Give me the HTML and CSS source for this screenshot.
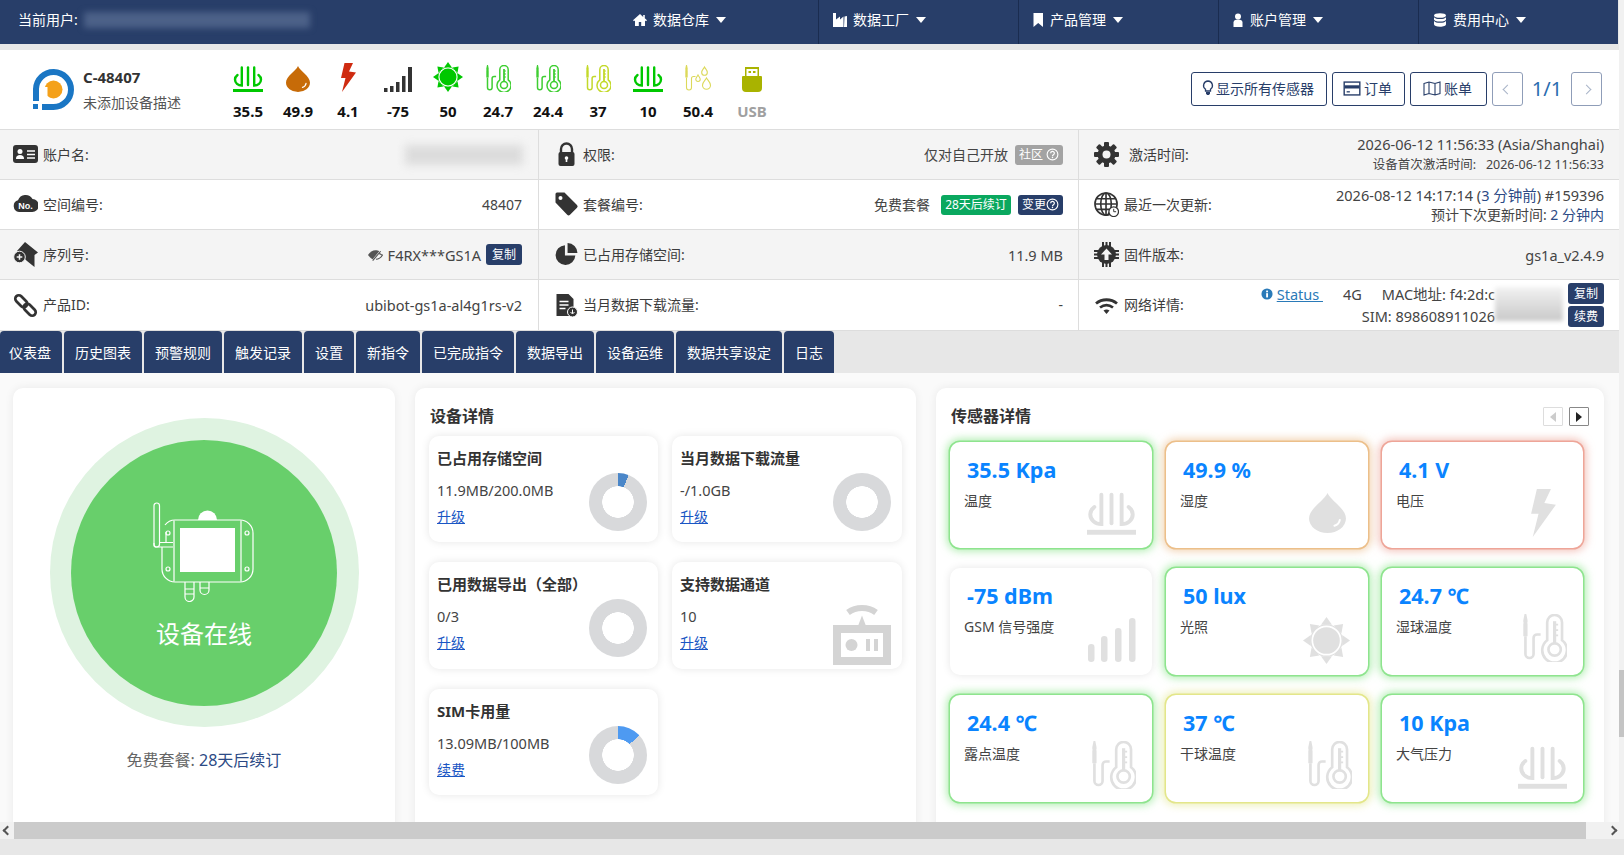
FILE: index.html
```html
<!DOCTYPE html>
<html lang="zh-CN">
<head>
    <meta charset="UTF-8">
    <meta name="viewport" content="width=device-width, initial-scale=1.0">
    <title>设备详情 - C-48407</title>
    <link rel="stylesheet" href="styles.css">
</head>
<body>
    <!-- Shared icons -->
    <svg class="icon-defs" aria-hidden="true">
        <symbol id="i-dib" viewBox="0 0 30 26">
            <g fill="none" stroke="currentColor" stroke-width="2.400" stroke-linecap="round">
                <path d="M4.500 9C2.800 10.300 2 12 2 13.500 2 17 5 19.500 8.800 19.500V1.500"/>
                <path d="M15 1.500V19"/>
                <path d="M21.200 1.500V19.500C25 19.500 28 17 28 13.500 28 12 27.200 10.300 25.500 9"/>
            </g>
            <rect x="0" y="23" width="30" height="3" fill="currentColor"/>
        </symbol>
        <symbol id="i-drop" viewBox="0 0 24 26">
            <path fill="currentColor" d="M12 0C14 5 24 10 24 16.500A12 9.500 0 0 1 0 16.500C0 10 10 5 12 0Z"/>
            <path fill="none" stroke="#fff" stroke-width="1.300" stroke-linecap="round" d="M20 17.500c-.3 2-1.500 3.200-3.500 3.800"/>
        </symbol>
        <symbol id="i-bolt" viewBox="0 0 15 29">
            <polygon fill="currentColor" points="3.500,0 12,0 8,8.500 15,9.500 1,29 4.500,15 0,15"/>
        </symbol>
        <symbol id="i-signal" viewBox="0 0 28 25">
            <g fill="currentColor">
                <rect x="0" y="21" width="3.500" height="4"/>
                <rect x="6" y="19" width="3.500" height="6"/>
                <rect x="12" y="15" width="3.500" height="10"/>
                <rect x="18" y="9" width="3.500" height="16"/>
                <rect x="24" y="0" width="4" height="25"/>
            </g>
        </symbol>
        <symbol id="i-bars" viewBox="0 0 48 44">
            <g fill="currentColor">
                <rect x="0" y="26" width="6.500" height="18" rx="3.200"/>
                <rect x="13" y="18" width="6.500" height="26" rx="3.200"/>
                <rect x="27" y="10" width="6.500" height="34" rx="3.200"/>
                <rect x="41" y="0" width="6.500" height="44" rx="3.200"/>
            </g>
        </symbol>
        <symbol id="i-sun" viewBox="0 0 30 30">
            <circle cx="15" cy="15" r="8.500" fill="currentColor"/>
            <circle cx="15" cy="15" r="10" fill="none" stroke="currentColor" stroke-width=".8"/>
            <g fill="currentColor">
                <polygon points="15,0 18.500,5 11.500,5"/>
                <polygon points="15,0 18.500,5 11.500,5" transform="rotate(45 15 15)"/>
                <polygon points="15,0 18.500,5 11.500,5" transform="rotate(90 15 15)"/>
                <polygon points="15,0 18.500,5 11.500,5" transform="rotate(135 15 15)"/>
                <polygon points="15,0 18.500,5 11.500,5" transform="rotate(180 15 15)"/>
                <polygon points="15,0 18.500,5 11.500,5" transform="rotate(225 15 15)"/>
                <polygon points="15,0 18.500,5 11.500,5" transform="rotate(270 15 15)"/>
                <polygon points="15,0 18.500,5 11.500,5" transform="rotate(315 15 15)"/>
            </g>
        </symbol>
        <symbol id="i-thermo" viewBox="0 0 26 27">
            <path fill="currentColor" d="M1.300 3.500 2 0h1l.7 3.500v1H3.600v1h.1v7h-2.400v-7h.1v-1H1.300z"/>
            <g fill="none" stroke="currentColor" stroke-width="1.500">
                <path d="M2.500 12.500V22.500a2.300 2.300 0 0 0 4.600 0V13.500a2 2 0 0 1 2-2h2"/>
                <path d="M14.800 14.800V4.700a4.200 4.200 0 0 1 8.400 0v10.100a7 7 0 1 1-8.400 0Z"/>
                <circle cx="19" cy="20" r="3.500"/>
                <path d="M19 16.500V4" stroke-width="1.800"/>
                <path d="M19 6h2M19 9h2M19 12h2" stroke-width="1"/>
            </g>
        </symbol>
        <symbol id="i-humid" viewBox="0 0 28 27">
            <path fill="currentColor" d="M1.300 3.500 2 0h1l.7 3.500v1H3.600v1h.1v7h-2.400v-7h.1v-1H1.300z"/>
            <g fill="none" stroke="currentColor" stroke-width="1.100">
                <path d="M2.500 12.500V22.500a2.500 2.500 0 0 0 5 0V13.500a2 2 0 0 1 2-2h2"/>
                <path d="M20.500 2c1 2 2.800 3.300 2.800 5.400a2.800 2.800 0 0 1-5.600 0C17.700 5.300 19.500 4 20.500 2Z"/>
                <path d="M14 10c.8 1.600 2.200 2.700 2.200 4.300a2.200 2.200 0 0 1-4.400 0c0-1.600 1.400-2.700 2.200-4.300Z"/>
                <path d="M22.500 13c1.200 2.400 4 4.300 4 7.200a4 4 0 0 1-8 0c0-2.900 2.800-4.800 4-7.200Z"/>
            </g>
        </symbol>
        <symbol id="i-usb" viewBox="0 0 20 25">
            <path fill="currentColor" d="M3 0h14v9h2a1 1 0 0 1 1 1v11a4 4 0 0 1-4 4H4a4 4 0 0 1-4-4V10a1 1 0 0 1 1-1h2Z"/>
            <rect x="4.500" y="2" width="11" height="7" fill="#fff"/>
            <rect x="6.500" y="4" width="2.500" height="2" fill="currentColor"/>
            <rect x="11" y="4" width="2.500" height="2" fill="currentColor"/>
        </symbol>
        <symbol id="i-help" viewBox="0 0 14 14">
            <circle cx="7" cy="7" r="5.800" fill="none" stroke="currentColor" stroke-width="1.200"/>
            <path fill="none" stroke="currentColor" stroke-width="1.300" d="M5 5.600a2 2 0 1 1 3 1.700c-.7.400-1 .7-1 1.500"/>
            <circle cx="7" cy="10.300" r=".8" fill="currentColor"/>
        </symbol>
    </svg>

    <div class="viewport">
        <div class="content">
            <!-- Top navigation -->
            <nav class="topnav">
                <div class="current-user">当前用户: <span class="blur-user"></span></div>
                <ul class="nav-items">
                    <li class="nav-item">
                        <svg class="nav-icon" viewBox="0 0 14 14"><path fill="#fff" d="M7 1 0 7.300l1 1 1-.9V13h3.800V9h2.400v4H12V7.400l1 .9 1-1-2.200-2V2h-1.600v2.100Z"/></svg>
                        数据仓库<span class="caret"></span>
                    </li>
                    <li class="nav-item">
                        <svg class="nav-icon" viewBox="0 0 14 14"><path fill="#fff" d="M0 0h3v6.500L7 3.500v3l3.500-3V14H0Zm11.500 3.500L14 3v11h-3Z"/></svg>
                        数据工厂<span class="caret"></span>
                    </li>
                    <li class="nav-item">
                        <svg class="nav-icon nav-icon-thin" viewBox="2 0 11 14"><path fill="#fff" d="M2.500 0h9.500v14L7.200 10 2.500 14Z"/></svg>
                        产品管理<span class="caret"></span>
                    </li>
                    <li class="nav-item">
                        <svg class="nav-icon nav-icon-thin" viewBox="2 0 11 14"><circle cx="7" cy="3.500" r="3" fill="#fff"/><path fill="#fff" d="M2.500 14V9.500C2.500 7.500 4 6.500 7 6.500s4.500 1 4.500 3V14Z"/></svg>
                        账户管理<span class="caret"></span>
                    </li>
                    <li class="nav-item">
                        <svg class="nav-icon" viewBox="0 0 14 14"><g fill="#fff"><ellipse cx="7" cy="2.500" rx="6" ry="2.300"/><path d="M1 4.200c1 1.300 3 1.800 6 1.800s5-.5 6-1.800v2.300C13 7.800 10.500 8.600 7 8.600S1 7.800 1 6.500Z"/><path d="M1 8c1 1.300 3 1.800 6 1.800s5-.5 6-1.800v3.200c0 1.500-2.500 2.500-6 2.500s-6-1-6-2.500Z"/></g></svg>
                        费用中心<span class="caret"></span>
                    </li>
                </ul>
            </nav>

            <!-- Device header -->
            <header class="device-bar">
                <svg class="logo" viewBox="0 0 44 44">
                    <path fill="none" stroke="#1a76c4" stroke-width="6" d="M5 33V21a17.500 17.500 0 1 1 17.500 18H11"/>
                    <rect x="2" y="36" width="5" height="5" fill="#1a76c4"/>
                    <circle cx="22.500" cy="21.500" r="9" fill="#f4a11a"/>
                    <path fill="#fff" d="M13 19h3.500v13H13z"/>
                </svg>
                <div class="device-name">
                    <div class="device-id">C-48407</div>
                    <div class="device-desc">未添加设备描述</div>
                </div>
                <div class="mini-sensors">
                    <div class="mini"><svg class="mini-icon c-green" width="30" height="26"><use href="#i-dib"/></svg><b>35.5</b></div>
                    <div class="mini"><svg class="mini-icon c-brown" width="24" height="26"><use href="#i-drop"/></svg><b>49.9</b></div>
                    <div class="mini"><svg class="mini-icon c-red" width="15" height="29"><use href="#i-bolt"/></svg><b>4.1</b></div>
                    <div class="mini"><svg class="mini-icon c-dark" width="28" height="25"><use href="#i-signal"/></svg><b>-75</b></div>
                    <div class="mini"><svg class="mini-icon c-green" width="30" height="30"><use href="#i-sun"/></svg><b>50</b></div>
                    <div class="mini"><svg class="mini-icon c-lime" width="26" height="27"><use href="#i-thermo"/></svg><b>24.7</b></div>
                    <div class="mini"><svg class="mini-icon c-lime" width="26" height="27"><use href="#i-thermo"/></svg><b>24.4</b></div>
                    <div class="mini"><svg class="mini-icon c-yellow" width="26" height="27"><use href="#i-thermo"/></svg><b>37</b></div>
                    <div class="mini"><svg class="mini-icon c-green" width="30" height="26"><use href="#i-dib"/></svg><b>10</b></div>
                    <div class="mini"><svg class="mini-icon c-pale" width="28" height="27"><use href="#i-humid"/></svg><b>50.4</b></div>
                    <div class="mini mini-usb"><svg class="mini-icon c-olive" width="20" height="25"><use href="#i-usb"/></svg><b>USB</b></div>
                </div>
                <div class="device-actions">
                    <button class="btn btn-narrow">
                        <svg class="btn-icon" viewBox="0 0 12 16"><path fill="none" stroke="currentColor" stroke-width="1.300" d="M6 1a4.500 4.500 0 0 0-2.500 8.200V11h5V9.200A4.500 4.500 0 0 0 6 1Z"/><path fill="currentColor" d="M4 12h4v1.500L7 15H5l-1-1.500Z"/></svg>显示所有传感器
                    </button>
                    <button class="btn btn-narrow">
                        <svg class="btn-icon btn-icon-wide" viewBox="0 0 16 14"><rect x=".7" y="1" width="14.600" height="12" fill="none" stroke="currentColor" stroke-width="1.300"/><rect x="1" y="4" width="14" height="3" fill="currentColor"/><rect x="3" y="9.500" width="3" height="1.200" fill="currentColor"/></svg>订单
                    </button>
                    <button class="btn">
                        <svg class="btn-icon btn-icon-wide" viewBox="0 0 18 15"><path fill="none" stroke="currentColor" stroke-width="1.100" d="M1 2.500 6 1l6 1.500L17 1v11.500L12 14l-6-1.500L1 14ZM6 1v11.500M12 2.500V14"/></svg>账单
                    </button>
                    <button class="btn btn-page"><span class="chev chev-left"></span></button>
                    <span class="page-count">1/1</span>
                    <button class="btn btn-page"><span class="chev chev-right"></span></button>
                </div>
            </header>

            <!-- Info table -->
            <section class="info-grid">
                <div class="cell odd">
                    <div class="cell-label">
                        <svg class="cell-icon" viewBox="0 0 25 25"><rect x="0" y="3" width="25" height="18" rx="3" fill="#333"/><circle cx="7" cy="9.500" r="2.500" fill="#fff"/><path fill="#fff" d="M3 17c0-3 1.500-4 4-4s4 1 4 4Z"/><path stroke="#fff" stroke-width="1.600" d="M14 9h8M14 12.500h8M14 16h8"/></svg>
                        账户名:
                    </div>
                    <span class="blur-account"></span>
                </div>
                <div class="cell odd col2">
                    <div class="cell-label">
                        <svg class="cell-icon" viewBox="0 0 24 25"><path fill="none" stroke="#333" stroke-width="2.400" d="M6.500 11V7a5.500 5.500 0 0 1 11 0v4"/><rect x="4" y="10" width="16" height="14" rx="2" fill="#333"/><circle cx="12" cy="16" r="1.800" fill="#fff"/><rect x="11.200" y="16" width="1.600" height="4" fill="#fff"/></svg>
                        权限:
                    </div>
                    <div class="cell-value">仅对自己开放 <span class="tag tag-gray">社区 <svg class="tag-help"><use href="#i-help"/></svg></span></div>
                </div>
                <div class="cell odd col3">
                    <div class="cell-label">
                        <svg class="cell-icon" viewBox="0 0 25 25"><g fill="#333"><circle cx="12.500" cy="12.500" r="9"/><rect x="10" y="0" width="5" height="25" rx="1"/><rect x="10" y="0" width="5" height="25" rx="1" transform="rotate(45 12.500 12.500)"/><rect x="10" y="0" width="5" height="25" rx="1" transform="rotate(90 12.500 12.500)"/><rect x="10" y="0" width="5" height="25" rx="1" transform="rotate(135 12.500 12.500)"/></g><circle cx="12.500" cy="12.500" r="4" fill="#f4f4f4"/></svg>
                        <span class="label-gap">激活时间:</span>
                    </div>
                    <div class="cell-value two-line">
                        <div>2026-06-12 11:56:33 (Asia/Shanghai)</div>
                        <div class="small-line">设备首次激活时间:&nbsp;&nbsp; 2026-06-12 11:56:33</div>
                    </div>
                </div>

                <div class="cell">
                    <div class="cell-label">
                        <svg class="cell-icon" viewBox="0 0 25 25"><path fill="#333" d="M6 20a6 6 0 0 1-1-11.700A8 8 0 0 1 19.500 7 6.500 6.500 0 0 1 19 20Z"/><text class="cloud-no" x="12.500" y="17">No.</text></svg>
                        空间编号:
                    </div>
                    <div class="cell-value">48407</div>
                </div>
                <div class="cell col2">
                    <div class="cell-label">
                        <svg class="cell-icon" viewBox="0 0 24 25"><path fill="#333" d="M1 2a1.500 1.500 0 0 1 1.500-1.500h7.500L22.500 13a2 2 0 0 1 0 2.800l-7 7a2 2 0 0 1-2.800 0L1 10.500Z"/><circle cx="6" cy="6" r="2" fill="#fff"/></svg>
                        套餐编号:
                    </div>
                    <div class="cell-value">免费套餐 <span class="tag tag-green">28天后续订</span><span class="tag tag-navy">变更<svg class="tag-help"><use href="#i-help"/></svg></span></div>
                </div>
                <div class="cell col3">
                    <div class="cell-label">
                        <svg class="cell-icon" viewBox="0 0 26 26"><g fill="none" stroke="#333" stroke-width="1.700"><circle cx="12.500" cy="12.500" r="11.500"/><ellipse cx="12.500" cy="12.500" rx="5.500" ry="11.500"/><path d="M12.500 1v23M1 12.500h23M2.500 7h20M2.500 18h20"/></g><circle cx="20.500" cy="20.500" r="5" fill="#fff" stroke="#333" stroke-width="1.300"/><path fill="none" stroke="#333" d="M20.500 17.500v3h2.500"/></svg>
                        最近一次更新:
                    </div>
                    <div class="cell-value two-line">
                        <div>2026-08-12 14:17:14 (<span class="navy-text">3 分钟前</span>) #159396</div>
                        <div class="cjk-line">预计下次更新时间: <span class="navy-text">2 分钟内</span></div>
                    </div>
                </div>

                <div class="cell odd">
                    <div class="cell-label">
                        <svg class="cell-icon" viewBox="0 0 25 25"><path fill="#333" d="M12 0 25 10.500 21.500 13V25L14 19 4 9Z"/><circle cx="6.500" cy="15" r="5.800" fill="#333" stroke="#f4f4f4"/><path stroke="#f4f4f4" stroke-width="1.500" d="M3.700 15h5.600M6.500 12.200v5.600"/></svg>
                        序列号:
                    </div>
                    <div class="cell-value">
                        <svg class="eye-off" viewBox="0 0 16 12"><path fill="#555" d="M0 6c2-3 5-5 8-5 1.500 0 3 .5 4 1L5 10.500C3 9.500 1.500 8 0 6Z"/><path fill="none" stroke="#555" stroke-width="1.200" d="M13.500 2 5 12M12 4.500c1.500.5 2.800 1.500 3.500 1.500-1.500 2.500-4 4.500-7 4.500"/></svg>
                        <span class="latin-value">F4RX***GS1A</span> <span class="tag tag-navy tag-copy">复制</span>
                    </div>
                </div>
                <div class="cell odd col2">
                    <div class="cell-label">
                        <svg class="cell-icon" viewBox="0 0 24 24"><path fill="#333" d="M10.500 3a9.500 9.500 0 1 0 10 10h-10Z"/><path fill="#333" d="M13 1v9.500h9.500A9.500 9.500 0 0 0 13 1Z"/></svg>
                        已占用存储空间:
                    </div>
                    <div class="cell-value latin-value">11.9 MB</div>
                </div>
                <div class="cell odd col3">
                    <div class="cell-label">
                        <svg class="cell-icon" viewBox="0 0 25 25"><circle cx="12.500" cy="12.500" r="9.500" fill="#333"/><path stroke="#333" stroke-width="2" d="M9 0v25M12.500 0v25M16 0v25M0 9h25M0 12.500h25M0 16h25"/><path fill="#f4f4f4" d="M12.500 6.500 18 12.500h-3.500V18h-4v-5.500H7Z"/></svg>
                        固件版本:
                    </div>
                    <div class="cell-value latin-value">gs1a_v2.4.9</div>
                </div>

                <div class="cell">
                    <div class="cell-label">
                        <svg class="cell-icon" viewBox="0 0 25 25"><g fill="none" stroke="#333" stroke-width="2.700" transform="rotate(-45 12.500 12.500)"><rect x="9" y="-.5" width="7" height="14" rx="3.500"/><rect x="9" y="11.500" width="7" height="14" rx="3.500"/></g></svg>
                        产品ID:
                    </div>
                    <div class="cell-value latin-value">ubibot-gs1a-al4g1rs-v2</div>
                </div>
                <div class="cell col2">
                    <div class="cell-label">
                        <svg class="cell-icon" viewBox="0 0 24 25"><path fill="#333" d="M2 1h12l5 5v17H2Z"/><path stroke="#fff" stroke-width="1.500" d="M5 8.500h9M5 12h9M5 15.500h6"/><circle cx="18" cy="19" r="5" fill="#333" stroke="#fff"/><path stroke="#fff" d="M18 16.500v4M16 19l2 2 2-2" fill="none"/></svg>
                        当月数据下载流量:
                    </div>
                    <div class="cell-value">-</div>
                </div>
                <div class="cell col3">
                    <div class="cell-label">
                        <svg class="cell-icon" viewBox="0 0 25 25"><g fill="none" stroke="#333" stroke-width="2.800"><path d="M2 10.500c6-5 15-5 21 0"/><path d="M6 14.500c4-3 9-3 13 0"/></g><path fill="#333" d="M9.500 17.500c2-1.300 4-1.300 6 0l-3 3.500Z"/></svg>
                        网络详情:
                    </div>
                    <div class="net-detail">
                        <div class="net-lines">
                            <div class="net-line">
                                <a class="status-link"><svg class="status-icon" viewBox="0 0 14 14"><circle cx="7" cy="7" r="6.500" fill="#2a7ab8"/><rect x="6" y="6" width="2.200" height="5" fill="#fff"/><rect x="6" y="3" width="2.200" height="2" fill="#fff"/></svg> Status&nbsp;</a>
                                <span class="net-4g">4G</span>
                                <span>MAC地址: f4:2d:c</span>
                            </div>
                            <div class="net-line">SIM: 898608911026</div>
                            <span class="blur-net"></span>
                        </div>
                        <div class="net-btns">
                            <span class="tag tag-navy tag-copy">复制</span>
                            <span class="tag tag-navy tag-copy">续费</span>
                        </div>
                    </div>
                </div>
            </section>

            <!-- Tabs -->
            <div class="tabs">
                <a class="tab tab-first">仪表盘</a>
                <a class="tab">历史图表</a>
                <a class="tab">预警规则</a>
                <a class="tab">触发记录</a>
                <a class="tab">设置</a>
                <a class="tab">新指令</a>
                <a class="tab">已完成指令</a>
                <a class="tab">数据导出</a>
                <a class="tab">设备运维</a>
                <a class="tab">数据共享设定</a>
                <a class="tab">日志</a>
            </div>

            <!-- Dashboard -->
            <main class="dashboard">
                <section class="card status-card">
                    <div class="status-ring">
                        <div class="status-core">
                            <svg class="device-art" viewBox="0 0 102 100" fill="none" stroke="#fff" stroke-width="1.200">
                                <rect x="1" y="1" width="5.500" height="44" rx="2.700"/>
                                <path d="M6 40.500h14M1 41v2.500a1.500 1.500 0 0 0 1.500 1.500H20"/>
                                <path d="M9 45v22a13 13 0 0 0 13 13h65a13 13 0 0 0 13-13V31a13 13 0 0 0-13-13H22a13 13 0 0 0-10 5"/>
                                <path d="M21 18.500v61M88 18.500v61"/>
                                <path d="M13 30v10"/>
                                <rect x="27" y="26" width="55" height="44" fill="#fff" stroke="none"/>
                                <path d="M45 18a9.500 9.500 0 0 1 19 0Z" fill="#fff" stroke="none"/>
                                <circle cx="15" cy="31" r="2"/><circle cx="15" cy="67" r="2"/>
                                <circle cx="94" cy="31" r="2"/><circle cx="94" cy="67" r="2"/>
                                <path d="M32 80v15a4.500 4.500 0 0 0 9 0V80M32 87h9M32 92h9"/>
                                <path d="M47 80v8a4.500 4.500 0 0 0 9 0v-8M47 86h9"/>
                            </svg>
                            <div class="status-text">设备在线</div>
                        </div>
                    </div>
                    <div class="plan-line">免费套餐: <span class="navy-text">28天后续订</span></div>
                </section>

                <section class="card detail-card">
                    <h3 class="card-title">设备详情</h3>
                    <div class="usage-grid">
                        <div class="usage">
                            <div class="usage-title">已占用存储空间</div>
                            <div class="usage-body">
                                <div class="usage-text"><div>11.9MB/200.0MB</div><a class="usage-link">升级</a></div>
                                <div class="donut donut-dim" style="--pct: 5.95%"></div>
                            </div>
                        </div>
                        <div class="usage">
                            <div class="usage-title">当月数据下载流量</div>
                            <div class="usage-body">
                                <div class="usage-text"><div>-/1.0GB</div><a class="usage-link">升级</a></div>
                                <div class="donut" style="--pct: 0%"></div>
                            </div>
                        </div>
                        <div class="usage">
                            <div class="usage-title">已用数据导出（全部）</div>
                            <div class="usage-body">
                                <div class="usage-text"><div>0/3</div><a class="usage-link">升级</a></div>
                                <div class="donut" style="--pct: 0%"></div>
                            </div>
                        </div>
                        <div class="usage">
                            <div class="usage-title">支持数据通道</div>
                            <div class="usage-body">
                                <div class="usage-text"><div>10</div><a class="usage-link">升级</a></div>
                                <svg class="channel-art" viewBox="0 0 58 62">
                                    <path fill="none" stroke="#d4d4d4" stroke-width="6" d="M15 9.500C23 3.500 35 3.500 43 9.500"/>
                                    <path fill="#d4d4d4" d="M29 12.500 33 23H25Z"/>
                                    <rect x="0" y="22" width="58" height="40" fill="#d4d4d4"/>
                                    <rect x="8" y="30" width="42" height="24" fill="#fff"/>
                                    <circle cx="18.500" cy="42" r="6" fill="#d4d4d4"/>
                                    <rect x="33" y="36" width="4" height="12" fill="#d4d4d4"/>
                                    <rect x="41" y="36" width="4" height="12" fill="#d4d4d4"/>
                                </svg>
                            </div>
                        </div>
                        <div class="usage">
                            <div class="usage-title">SIM卡用量</div>
                            <div class="usage-body">
                                <div class="usage-text"><div>13.09MB/100MB</div><a class="usage-link">续费</a></div>
                                <div class="donut" style="--pct: 13.09%"></div>
                            </div>
                        </div>
                    </div>
                </section>

                <section class="card sensor-card">
                    <div class="sensor-head">
                        <h3 class="card-title">传感器详情</h3>
                        <div class="sensor-nav">
                            <span class="pager pager-off"><span class="tri tri-left"></span></span>
                            <span class="pager"><span class="tri tri-right"></span></span>
                        </div>
                    </div>
                    <div class="sensor-grid">
                        <div class="sensor glow-green">
                            <div class="sensor-value">35.5 Kpa</div>
                            <div class="sensor-label">温度</div>
                            <svg class="sensor-icon" width="49" height="43"><use href="#i-dib"/></svg>
                        </div>
                        <div class="sensor glow-orange">
                            <div class="sensor-value">49.9 %</div>
                            <div class="sensor-label">湿度</div>
                            <svg class="sensor-icon icon-drop" width="37" height="40"><use href="#i-drop"/></svg>
                        </div>
                        <div class="sensor glow-red">
                            <div class="sensor-value">4.1 V</div>
                            <div class="sensor-label">电压</div>
                            <svg class="sensor-icon icon-bolt" width="25" height="48"><use href="#i-bolt"/></svg>
                        </div>
                        <div class="sensor">
                            <div class="sensor-value">-75 dBm</div>
                            <div class="sensor-label">GSM 信号强度</div>
                            <svg class="sensor-icon" width="48" height="44"><use href="#i-bars"/></svg>
                        </div>
                        <div class="sensor glow-green">
                            <div class="sensor-value">50 lux</div>
                            <div class="sensor-label">光照</div>
                            <svg class="sensor-icon icon-sun" width="47" height="47"><use href="#i-sun"/></svg>
                        </div>
                        <div class="sensor glow-green">
                            <div class="sensor-value">24.7 ℃</div>
                            <div class="sensor-label">湿球温度</div>
                            <svg class="sensor-icon" width="46" height="48"><use href="#i-thermo"/></svg>
                        </div>
                        <div class="sensor glow-green">
                            <div class="sensor-value">24.4 ℃</div>
                            <div class="sensor-label">露点温度</div>
                            <svg class="sensor-icon" width="46" height="48"><use href="#i-thermo"/></svg>
                        </div>
                        <div class="sensor glow-yellow">
                            <div class="sensor-value">37 ℃</div>
                            <div class="sensor-label">干球温度</div>
                            <svg class="sensor-icon" width="46" height="48"><use href="#i-thermo"/></svg>
                        </div>
                        <div class="sensor glow-green">
                            <div class="sensor-value">10 Kpa</div>
                            <div class="sensor-label">大气压力</div>
                            <svg class="sensor-icon" width="49" height="43"><use href="#i-dib"/></svg>
                        </div>
                    </div>
                </section>
            </main>
        </div>
        <div class="vscroll"><div class="vscroll-thumb"></div></div>
    </div>

    <div class="hscroll">
        <span class="hscroll-btn"><span class="chev chev-left chev-dark"></span></span>
        <div class="hscroll-thumb"></div>
        <span class="hscroll-btn hscroll-end"><span class="chev chev-right chev-dark"></span></span>
    </div>
    <div class="foot-gap"></div>
</body>
</html>
```

FILE: styles.css
```css
/* Base */
* {
    box-sizing: border-box;
}

html, body {
    margin: 0;
    height: 855px;
    overflow: hidden;
}

body {
    background: #e7e7e7;
    font-family: "Noto Sans", "Noto Sans CJK SC", sans-serif;
    font-size: 14px;
    line-height: 20px;
    color: #3c3c3c;
}

.icon-defs {
    display: none;
}

.viewport {
    display: flex;
    height: 822px;
    overflow: hidden;
}

.content {
    width: 1619px;
    flex: none;
}

/* Top navigation */
.topnav {
    display: flex;
    align-items: stretch;
    justify-content: space-between;
    width: 1618px;
    height: 44px;
    background: #283e69;
    color: #fff;
}

.current-user {
    display: flex;
    align-items: center;
    gap: 6px;
    padding-left: 18px;
    padding-bottom: 4px;
}

.blur-user {
    width: 226px;
    height: 16px;
    background: #4c6188;
    filter: blur(3px);
}

.nav-items {
    display: flex;
    margin: 0;
    padding: 0;
    list-style: none;
}

.nav-item {
    display: flex;
    align-items: center;
    width: 200px;
    padding-left: 14px;
    padding-bottom: 4px;
    border-left: 1px solid #1a2c50;
}

.nav-item:first-child {
    border-left-color: transparent;
}

.nav-icon {
    width: 14px;
    height: 14px;
    margin-right: 6px;
}

.nav-icon-thin {
    width: 11px;
}

.caret {
    width: 0;
    height: 0;
    margin-left: 7px;
    border-left: 5px solid transparent;
    border-right: 5px solid transparent;
    border-top: 6px solid #fff;
}

/* Device header */
.device-bar {
    display: flex;
    align-items: flex-start;
    height: 79px;
    margin-top: 6px;
    padding-left: 31px;
    background: #fff;
}

.logo {
    width: 44px;
    height: 44px;
    margin-top: 18px;
}

.device-name {
    width: 140px;
    margin-left: 8px;
    margin-top: 17px;
}

.device-id {
    font-size: 15px;
    font-weight: 700;
    color: #333;
}

.device-desc {
    margin-top: 6px;
    color: #555;
}

.mini-sensors {
    display: flex;
    padding-top: 8px;
}

.mini {
    display: flex;
    flex-direction: column;
    align-items: center;
    justify-content: flex-end;
    width: 50px;
    height: 63px;
}

.mini b {
    margin-top: 9px;
    font-size: 15px;
    color: #111;
}

.mini-usb {
    margin-left: 4px;
}

.mini-usb b {
    color: #a0a0a0;
}

.c-green { color: #00c800; }
.c-brown { color: #c76b08; }
.c-red { color: #cf2b10; }
.c-dark { color: #333; }
.c-lime { color: #3fce32; }
.c-yellow { color: #c3d92a; }
.c-pale { color: #dcd95a; }
.c-olive { color: #a9b300; }

.device-actions {
    display: flex;
    align-items: center;
    gap: 5px;
    margin-left: auto;
    margin-top: 22px;
    padding-right: 17px;
}

.btn {
    display: flex;
    align-items: center;
    justify-content: center;
    height: 34px;
    padding: 0 14px 2px;
    background: #fff;
    border: 1px solid #283e69;
    border-radius: 3px;
    font-family: inherit;
    font-size: 14px;
    color: #283e69;
}

.btn-narrow {
    padding: 0 12px 2px;
}

.btn-icon {
    width: 12px;
    height: 16px;
    margin-right: 2px;
    margin-left: -2px;
}

.btn-icon-wide {
    width: 18px;
    height: 15px;
    margin-right: 3px;
}

.btn-page {
    width: 31px;
    padding: 0;
    border-color: #8f9db8;
}

.chev {
    display: block;
    width: 7px;
    height: 7px;
    border-left: 1px solid #a9b4c8;
    border-bottom: 1px solid #a9b4c8;
}

.chev-left {
    transform: rotate(45deg);
}

.chev-right {
    transform: rotate(225deg);
}

.chev-dark {
    border-color: #555;
    border-width: 2px;
}

.page-count {
    width: 38px;
    font-size: 20px;
    text-align: center;
    color: #2a6cb0;
}

/* Info table */
.info-grid {
    display: grid;
    grid-template-columns: 539px 540px 540px;
    grid-auto-rows: 50px;
    border-top: 1px solid #ddd;
    border-bottom: 2px solid #ddd;
    height: 202px;
}

.cell {
    position: relative;
    display: flex;
    align-items: center;
    justify-content: space-between;
    padding: 0 16px 0 13px;
    background: #fff;
    border-right: 1px solid #ddd;
    border-bottom: 1px solid #ddd;
}

.cell.odd {
    background: #f4f4f4;
}

.col2 {
    padding: 0 15px 0 15px;
}

.col2 .cell-icon {
    margin-right: 4px;
}

.col3 {
    padding: 0 15px;
    border-right: 0;
}

.cell:nth-last-child(-n+3) {
    border-bottom: 0;
}

.cell-label {
    display: flex;
    align-items: center;
    flex: none;
    color: #3c3c3c;
}

.cell-icon {
    width: 25px;
    height: 25px;
    margin-right: 5px;
    flex: none;
}

.label-gap {
    margin-left: 5px;
}

.cloud-no {
    font-family: "Liberation Sans", sans-serif;
    font-size: 9px;
    font-weight: 700;
    text-anchor: middle;
    fill: #fff;
}

.cell-value {
    display: flex;
    align-items: center;
    gap: 5px;
    white-space: nowrap;
    color: #444;
}

.latin-value {
    font-size: 14.5px;
}

.two-line {
    display: block;
    font-size: 14.5px;
    text-align: right;
}

.cjk-line {
    font-size: 14px;
}

.small-line {
    font-size: 12.5px;
    line-height: 22px;
}

.navy-text {
    color: #2c4a85;
}

.eye-off {
    width: 15px;
    height: 12px;
}

.tag {
    display: inline-flex;
    align-items: center;
    justify-content: center;
    height: 20px;
    padding: 0 4px;
    border-radius: 3px;
    font-size: 12px;
    color: #fff;
}

.tag-gray {
    width: 48px;
    margin-left: 2px;
    background: #a3a3a3;
    gap: 3px;
}

.tag-green {
    margin-left: 6px;
    width: 70px;
    background: #0aa85f;
}

.tag-navy {
    background: #283e69;
}

.tag-navy:not(.tag-copy) {
    width: 45px;
    margin-left: 2px;
}

.tag-copy {
    width: 36px;
    height: 21px;
}

.tag-help {
    width: 13px;
    height: 13px;
}

/* Network cell */
.net-detail {
    display: flex;
    align-items: center;
    gap: 5px;
}

.net-lines {
    position: relative;
    padding-right: 68px;
    font-size: 14.5px;
    text-align: right;
    white-space: nowrap;
    color: #444;
}

.net-line {
    display: flex;
    justify-content: flex-end;
    line-height: 22px;
}

.net-4g {
    margin: 0 20px;
}

.status-link {
    display: inline-flex;
    align-items: center;
    gap: 4px;
    color: #2a7ab8;
    text-decoration: underline;
}

.status-icon {
    width: 12px;
    height: 12px;
}

.blur-net {
    position: absolute;
    top: 4px;
    right: 0;
    width: 68px;
    height: 34px;
    background: linear-gradient(180deg, #f2f2f2, #c9c9c9);
    filter: blur(2px);
}

.net-btns {
    display: flex;
    flex-direction: column;
    gap: 2px;
}

.blur-account {
    width: 118px;
    height: 20px;
    margin-right: -1px;
    background: #dcdcdc;
    filter: blur(4px);
}

/* Tabs */
.tabs {
    display: flex;
    gap: 2px;
    height: 42px;
    background: #e7e7e7;
}

.tab {
    display: flex;
    align-items: center;
    padding: 2px 11px 0;
    background: #283e69;
    border-radius: 4px 4px 0 0;
    color: #fff;
}

.tab-first {
    padding: 2px 11px 0 9px;
}

/* Dashboard */
.dashboard {
    display: grid;
    grid-template-columns: 382px 501px 668px;
    gap: 20px;
    height: 449px;
    padding: 15px 15px 0 13px;
    background: #fafafa;
}

.card {
    height: 480px;
    background: #fff;
    border-radius: 10px;
    box-shadow: 0 0 10px rgba(0, 0, 0, 0.07);
}

.card-title {
    margin: 0;
    padding-top: 1px;
    font-size: 16px;
    line-height: 24px;
    font-weight: 700;
    color: #333;
}

.status-card {
    display: flex;
    flex-direction: column;
    align-items: center;
    padding-top: 30px;
}

.status-ring {
    display: flex;
    align-items: center;
    justify-content: center;
    width: 309px;
    height: 309px;
    background: #dff3e1;
    border-radius: 50%;
}

.status-core {
    display: flex;
    flex-direction: column;
    align-items: center;
    width: 266px;
    height: 266px;
    padding-top: 62px;
    background: #68cf6b;
    border-radius: 50%;
}

.device-art {
    width: 102px;
    height: 100px;
}

.status-text {
    margin-top: 16px;
    font-size: 24px;
    line-height: 32px;
    color: #fff;
}

.plan-line {
    margin-top: 23px;
    font-size: 16px;
    color: #666;
}

.detail-card {
    padding: 15px 14px 0;
}

.detail-card .card-title {
    padding-left: 1px;
}

.usage-grid {
    display: grid;
    grid-template-columns: 229px 230px;
    grid-template-rows: 106px 107px 106px;
    gap: 20px 14px;
    margin-top: 8px;
}

.usage {
    padding: 12px 11px 0 8px;
    background: #fff;
    border-radius: 10px;
    box-shadow: 0 0 8px rgba(0, 0, 0, 0.1);
}

.usage-title {
    font-size: 15px;
    font-weight: 700;
    color: #333;
}

.usage-body {
    display: flex;
    justify-content: space-between;
    margin-top: 5px;
}

.usage-text {
    padding-top: 7px;
    font-size: 14.5px;
    color: #444;
}

.usage-link {
    display: block;
    margin-top: 7px;
    font-size: 14px;
    color: #1a56c4;
    text-decoration: underline;
}

.donut {
    width: 58px;
    height: 58px;
    border-radius: 50%;
    background:
        radial-gradient(circle, #fff 15.5px, transparent 16px),
        conic-gradient(#4e9af1 0 var(--pct), #d8d9db 0);
}

.donut-dim {
    background:
        radial-gradient(circle, #fff 15.5px, transparent 16px),
        conic-gradient(#4a86c8 0 var(--pct), #d8d9db 0);
}

.channel-art {
    width: 58px;
    height: 62px;
    margin-top: 4px;
}

/* Sensor panel */
.sensor-card {
    padding: 15px 21px 0 14px;
}

.sensor-head {
    display: flex;
    justify-content: space-between;
    padding-left: 1px;
}

.sensor-nav {
    display: flex;
    gap: 6px;
    margin-top: 4px;
    margin-right: -6px;
}

.pager {
    display: flex;
    align-items: center;
    justify-content: center;
    width: 20px;
    height: 19px;
    border: 1px solid #888;
    border-radius: 1px;
}

.pager-off {
    border-color: #ddd;
}

.tri {
    width: 0;
    height: 0;
    border-top: 5px solid transparent;
    border-bottom: 5px solid transparent;
}

.tri-left {
    border-right: 6px solid #ccc;
}

.tri-right {
    border-left: 6px solid #222;
}

.sensor-grid {
    display: grid;
    grid-template-columns: 202px 202px 201px;
    grid-template-rows: 106px 107px 107px;
    gap: 20px 14px;
    margin-top: 14px;
}

.sensor {
    position: relative;
    padding: 13px 14px 0;
    background: #fff;
    border-radius: 10px;
    box-shadow: 0 0 8px rgba(0, 0, 0, 0.1);
}

.glow-green {
    box-shadow: 0 0 0 1.500px #8ee48e, 0 0 8px 3px rgba(120, 225, 120, 0.6);
}

.glow-orange {
    box-shadow: 0 0 0 1.500px #ecbf8a, 0 0 8px 3px rgba(232, 178, 120, 0.6);
}

.glow-red {
    box-shadow: 0 0 0 1.500px #eea598, 0 0 8px 3px rgba(234, 150, 135, 0.6);
}

.glow-yellow {
    box-shadow: 0 0 0 1.500px #e3e68a, 0 0 8px 3px rgba(222, 226, 125, 0.6);
}

.sensor-value {
    padding-left: 3px;
    font-size: 21.5px;
    line-height: 30px;
    font-weight: 700;
    color: #0a84ff;
}

.sensor-label {
    margin-top: 6px;
    color: #444;
}

.sensor-icon {
    position: absolute;
    right: 16px;
    bottom: 13px;
    color: #e0e0e0;
}

.icon-drop {
    right: 22px;
    bottom: 15px;
}

.icon-bolt {
    right: 27px;
    bottom: 11px;
}

.icon-sun {
    right: 18px;
    bottom: 11px;
}

/* Scrollbars */
.vscroll {
    flex: 1;
    background: #f1f1f1;
}

.vscroll-thumb {
    height: 67px;
    margin-top: 670px;
    background: #c4c4c4;
}

.hscroll {
    display: flex;
    height: 17px;
    background: #f1f1f1;
}

.hscroll-btn {
    display: flex;
    align-items: center;
    justify-content: center;
    width: 14px;
}

.hscroll-thumb {
    width: 1572px;
    background: #cbcbcb;
}

.hscroll-end {
    flex: 1;
    padding-left: 14px;
}

.foot-gap {
    height: 16px;
    background: #e7e7e7;
}
```
